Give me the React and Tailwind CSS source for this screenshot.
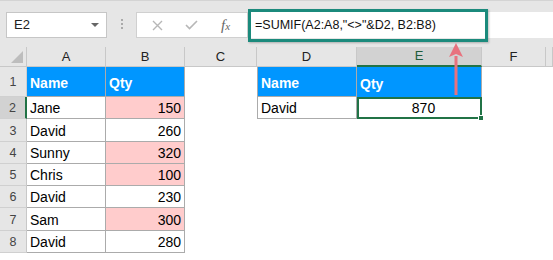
const rows = [
  ['Jane', 150, true],
  ['David', 260, false],
  ['Sunny', 320, true],
  ['Chris', 100, true],
  ['David', 230, false],
  ['Sam', 300, true],
  ['David', 280, false],
];

const cols = ['A', 'B', 'C', 'D', 'E', 'F', ''];

function Toolbar() {
  return (
    <div className="flex h-[47px] items-start border-t border-[#d4d4d4] bg-[#e6e6e6] pt-[11px]">
      <div className="ml-[6px] flex h-[26px] w-[101px] items-center justify-between border border-[#c6c6c6] bg-white pl-[7px] pr-[7px]">
        <span className="text-[13px] text-[#222]">E2</span>
        <span className="h-0 w-0 border-x-[4px] border-t-[4px] border-x-transparent border-t-[#666]" />
      </div>
      <div className="ml-[14px] mt-[7px] flex flex-col gap-[2px]">
        <span className="h-[2px] w-[2px] bg-[#aaa]" />
        <span className="h-[2px] w-[2px] bg-[#aaa]" />
        <span className="h-[2px] w-[2px] bg-[#aaa]" />
      </div>
      <div className="ml-[13px] flex h-[26px] w-[112px] items-center border border-[#d0d0d0] bg-white">
        <svg className="ml-[15px]" width="11" height="11" viewBox="0 0 11 11">
          <path d="M1 1 L10 10 M10 1 L1 10" stroke="#b7b7b7" strokeWidth="1.4" fill="none" />
        </svg>
        <svg className="ml-[22px]" width="13" height="10" viewBox="0 0 13 10">
          <path d="M1 5 L4.5 8.5 L12 1" stroke="#b7b7b7" strokeWidth="1.6" fill="none" />
        </svg>
        <span className="ml-[23px] font-['Liberation_Serif',serif] text-[15px] italic leading-none text-[#666]">
          f<span className="text-[11px]">x</span>
        </span>
      </div>
      <div className="relative flex h-[26px] flex-1 items-center bg-white pl-[7px]">
        <span className="font-['Liberation_Sans',Arial,sans-serif] text-[12.5px] text-[#111]">
          =SUMIF(A2:A8,"&lt;&gt;"&amp;D2, B2:B8)
        </span>
        <div className="absolute left-0 top-[-3px] h-[33px] w-[240px] border-[3px] border-[#1b8a7c] shadow-[1px_1px_2px_rgba(0,0,0,0.25)]" />
      </div>
    </div>
  );
}

function Sheet() {
  const text = "font-['Liberation_Sans',Arial,sans-serif] text-[14px] leading-none";
  const line = 'border-[#ababab]';
  return (
    <div className="grid grid-cols-[27px_79px_79px_72px_100px_125px_64px_1fr] grid-rows-[20px_30px_repeat(7,22.3px)_1fr] bg-white">
      <div className="relative border-b border-r border-[#c8c8c8] bg-[#e6e6e6]">
        <span className="absolute bottom-[3px] right-[3px] h-0 w-0 border-b-[12px] border-l-[12px] border-b-[#bdbdbd] border-l-transparent" />
      </div>
      {cols.map((c) =>
        c === 'E' ? (
          <div key="E" className="flex items-center justify-center border-b-2 border-r border-b-[#217346] border-r-[#c8c8c8] bg-[#d2d2d2] text-[13px] text-[#1e5c3a]">
            E
          </div>
        ) : (
          <div key={c || 'G'} className="flex items-center justify-center border-b border-r border-[#c8c8c8] bg-[#e6e6e6] text-[13px] text-[#222]">
            {c}
          </div>
        )
      )}

      {/* row 1 */}
      <div className="flex items-end justify-center border-b border-r border-[#d0d0d0] bg-[#e6e6e6] pb-[4px] text-[12.5px] text-[#444]">1</div>
      <div className={`flex items-end border-b border-r ${line} bg-[#0096ff] pb-[6px] pl-[3px] font-bold text-white ${text}`}>Name</div>
      <div className={`flex items-end border-b border-r ${line} bg-[#0096ff] pb-[6px] pl-[3px] font-bold text-white ${text}`}>Qty</div>
      <div />
      <div className={`flex items-end border-b border-l border-r ${line} bg-[#0096ff] pb-[6px] pl-[3px] font-bold text-white ${text}`}>Name</div>
      <div className={`relative flex items-end border-r ${line} bg-[#0096ff] pb-[6px] pl-[3px] font-bold text-white ${text}`}>Qty</div>
      <div />
      <div />

      {rows.map(([name, qty, pink], i) => {
        const n = i + 2;
        const selected = n === 2;
        return [
          <div
            key={`h${n}`}
            className={`flex items-center justify-center border-b border-[#d0d0d0] pt-[2px] text-[12.5px] text-[#444] ${
              selected ? 'border-r-2 border-r-[#217346] bg-[#d2d2d2]' : 'border-r border-r-[#c8c8c8] bg-[#e6e6e6]'
            }`}
          >
            {n}
          </div>,
          <div key={`a${n}`} className={`flex items-end border-b border-r ${line} pb-[3px] pl-[3px] text-black ${text}`}>
            {name}
          </div>,
          <div
            key={`b${n}`}
            className={`flex items-end justify-end border-b border-r ${line} pb-[3px] pr-[3px] text-black ${text} ${pink ? 'bg-[#ffcccc]' : ''}`}
          >
            {qty}
          </div>,
          <div key={`c${n}`} />,
          selected ? (
            <div key={`d${n}`} className={`flex items-end border-b border-l border-r ${line} pb-[3px] pl-[3px] text-black ${text}`}>
              David
            </div>
          ) : (
            <div key={`d${n}`} />
          ),
          selected ? (
            <div key={`e${n}`} className={`relative flex items-end justify-center border-2 border-[#217346] pb-[2px] pl-[8px] text-black ${text}`}>
              870
              <span className="absolute bottom-[-4px] right-[-4px] h-[6px] w-[6px] border border-white bg-[#217346]" />
            </div>
          ) : (
            <div key={`e${n}`} />
          ),
          <div key={`f${n}`} />,
          <div key={`g${n}`} />,
        ];
      })}

      <div className="border-r border-[#c8c8c8] bg-[#e6e6e6]" />
    </div>
  );
}

export default function App() {
  return (
    <div className="relative h-[260px] w-[553px] overflow-hidden bg-white font-['Liberation_Sans',Arial,sans-serif]">
      <Toolbar />
      <Sheet />
      <svg className="absolute left-[448px] top-[42px]" width="16" height="54" viewBox="0 0 16 54">
        <path d="M8 14 L8 53" stroke="#e8727e" strokeWidth="3" fill="none" />
        <path d="M8 1 L15 15 L8 12 L1 15 Z" fill="#e8727e" />
      </svg>
    </div>
  );
}
